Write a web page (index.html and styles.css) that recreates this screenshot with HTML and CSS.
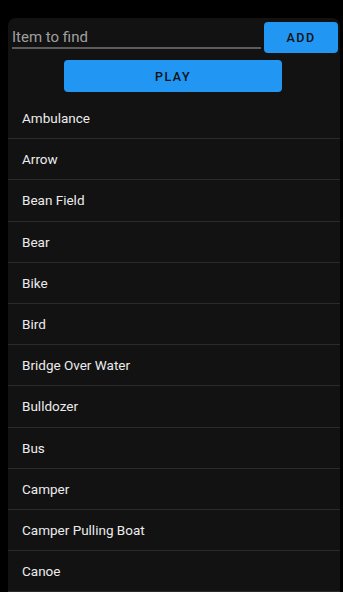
FILE: index.html
```html
<!DOCTYPE html>
<html lang="en">
<head>
    <meta charset="UTF-8">
    <meta name="viewport" content="width=device-width, initial-scale=1.0">
    <title>Item finder</title>
    <link rel="stylesheet" href="styles.css">
</head>
<body>
    <div class="panel">
        <div class="add-row">
            <input class="item-input" type="text" placeholder="Item to find">
            <button class="btn btn-add">ADD</button>
        </div>
        <div class="play-row">
            <button class="btn btn-play">PLAY</button>
        </div>

        <ul class="items">
            <li class="item">Ambulance</li>
            <li class="item">Arrow</li>
            <li class="item">Bean Field</li>
            <li class="item">Bear</li>
            <li class="item">Bike</li>
            <li class="item">Bird</li>
            <li class="item">Bridge Over Water</li>
            <li class="item">Bulldozer</li>
            <li class="item">Bus</li>
            <li class="item">Camper</li>
            <li class="item">Camper Pulling Boat</li>
            <li class="item">Canoe</li>
        </ul>
    </div>
</body>
</html>
```

FILE: styles.css
```css
html, body {
    height: 100%;
}

body {
    margin: 0;
    padding: 18px 3px 0 8px;
    box-sizing: border-box;
    background-color: #000;
    font-family: Roboto, 'Noto Sans', sans-serif;
    overflow: hidden;
}

.panel {
    background-color: #121212;
    border-radius: 8px 8px 0 0;
    min-height: 100%;
}

.add-row {
    display: flex;
    align-items: flex-start;
    gap: 3px;
    padding: 4px 2px 0 4px;
}

.item-input {
    flex: 1;
    height: 27px;
    margin: 0;
    padding: 4px 0 0;
    box-sizing: border-box;
    background: transparent;
    border: none;
    border-bottom: 2px solid #5c5c5c;
    color: #ddd;
    font-family: Roboto, sans-serif;
    font-size: 15px;
    outline: none;
}

.item-input::placeholder {
    color: #a0a0a0;
}

.btn {
    background-color: #2196f3;
    color: #111;
    border: none;
    border-radius: 4px;
    font-family: Roboto, sans-serif;
    font-weight: 500;
    font-size: 12.5px;
    letter-spacing: 1.5px;
    cursor: pointer;
    padding: 0;
}

.btn-add {
    width: 74px;
    height: 31px;
}

.play-row {
    display: flex;
    justify-content: center;
    padding: 7px 0 6px;
}

.btn-play {
    width: 218px;
    height: 32px;
    margin-left: -2px;
}

.items {
    list-style: none;
    margin: 0;
    padding: 0;
}

.item {
    box-sizing: border-box;
    height: 41.2px;
    line-height: 41px;
    padding-left: 14px;
    border-bottom: 1px solid #2b2b2b;
    color: #ececec;
    font-size: 13.5px;
}
```
